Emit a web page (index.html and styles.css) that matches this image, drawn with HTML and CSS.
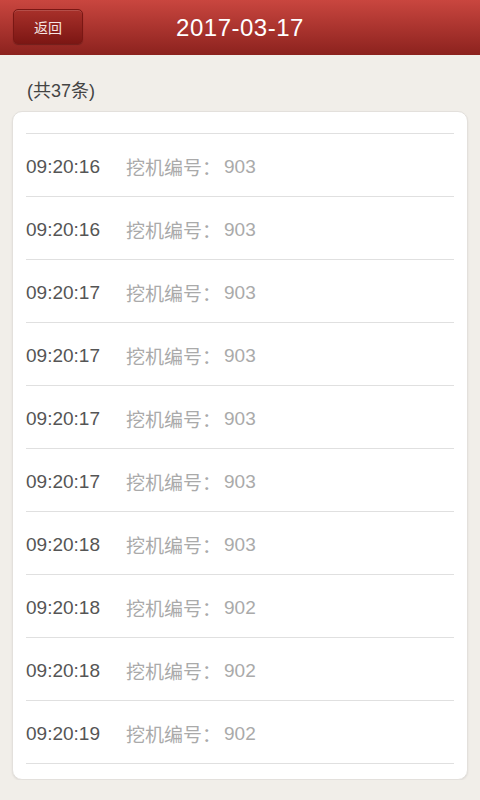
FILE: index.html
```html
<!DOCTYPE html>
<html>
<head>
  <meta charset="UTF-8">
  <title>2017-03-17</title>
  <link rel="stylesheet" href="styles.css">
</head>
<body>
  <!-- Header -->
  <div class="header">
    <button class="back-btn">返回</button>
    <h1 class="title">2017-03-17</h1>
  </div>

  <p class="count">(共37条)</p>

  <!-- Record list -->
  <div class="card">
    <ul class="list">
      <li><span class="time">09:20:16</span><span class="label">挖机编号：</span><span class="num">903</span></li>
      <li><span class="time">09:20:16</span><span class="label">挖机编号：</span><span class="num">903</span></li>
      <li><span class="time">09:20:17</span><span class="label">挖机编号：</span><span class="num">903</span></li>
      <li><span class="time">09:20:17</span><span class="label">挖机编号：</span><span class="num">903</span></li>
      <li><span class="time">09:20:17</span><span class="label">挖机编号：</span><span class="num">903</span></li>
      <li><span class="time">09:20:17</span><span class="label">挖机编号：</span><span class="num">903</span></li>
      <li><span class="time">09:20:18</span><span class="label">挖机编号：</span><span class="num">903</span></li>
      <li><span class="time">09:20:18</span><span class="label">挖机编号：</span><span class="num">902</span></li>
      <li><span class="time">09:20:18</span><span class="label">挖机编号：</span><span class="num">902</span></li>
      <li><span class="time">09:20:19</span><span class="label">挖机编号：</span><span class="num">902</span></li>
    </ul>
  </div>
</body>
</html>
```

FILE: styles.css
```css
body {
  font-family: "Liberation Sans", "Noto Sans CJK SC", sans-serif;
  background: #f1eee9;
  margin: 0;
  padding: 0;
}
.header {
  height: 55px;
  background: linear-gradient(#c9463f, #8c221e);
  display: flex;
  align-items: center;
  justify-content: center;
  position: relative;
}
.back-btn {
  position: absolute;
  left: 13px;
  top: 9px;
  width: 70px;
  height: 35px;
  border: 1px solid #7a1714;
  border-radius: 5px;
  background: linear-gradient(#a8302a, #7d1714);
  box-shadow: inset 0 1px 0 rgba(255, 255, 255, 0.15), 0 1px 1px rgba(0, 0, 0, 0.25);
  color: #f6e6e4;
  font-family: "Noto Sans CJK SC", sans-serif;
  font-size: 14px;
  padding: 0;
}
.title {
  margin: 0;
  color: #fff;
  font-size: 24px;
  font-weight: normal;
  letter-spacing: 0.5px;
}
.count {
  margin: 24px 0 0 27px;
  height: 32px;
  font-size: 18px;
  line-height: 24px;
  color: #444;
}
.card {
  margin: 0 12px;
  padding: 21px 13px 15px;
  background: #fff;
  border: 1px solid #e3e0dc;
  border-radius: 10px;
  box-shadow: 0 1px 2px rgba(0, 0, 0, 0.08);
}
.list {
  list-style: none;
  margin: 0;
  padding: 0;
  border-top: 1px solid #e0e0e0;
}
.list li {
  box-sizing: border-box;
  height: 63px;
  padding-top: 3px;
  border-bottom: 1px solid #e0e0e0;
  display: flex;
  align-items: center;
  font-size: 19px;
}
.time {
  width: 100px;
  color: #555;
}
.label {
  color: #aaa;
  font-size: 19px;
}
.num {
  color: #aaa;
  margin-left: 3px;
}
```
